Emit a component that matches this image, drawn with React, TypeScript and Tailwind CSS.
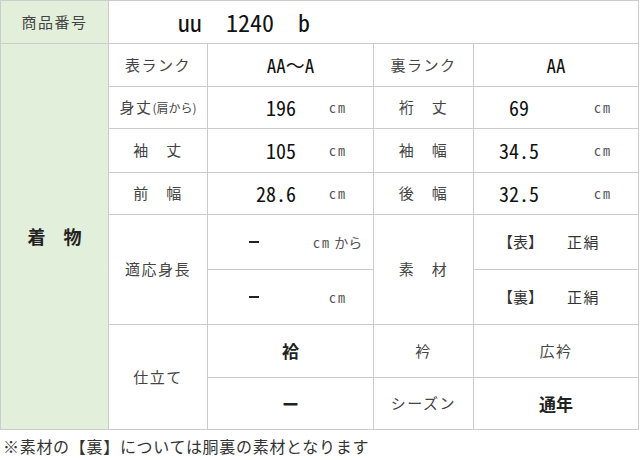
const jp = "font-['Noto_Sans_CJK_JP',sans-serif]";
const mono = "font-['Noto_Sans_Mono_CJK_JP','DejaVu_Sans_Mono',monospace]";
const cell = "border border-[#cccccc] p-0 align-middle";
const label = `${cell} text-center text-[15px] tracking-[1.5px] text-[#444] ${jp}`;

function Measure({ value, wide }: { value: string; wide?: boolean }) {
  // 左は右揃え、右は中央揃え
  return (
    <td className={cell}>
      <div className="flex items-center">
        <span
          className={`${wide ? "w-[90px] text-center" : "w-[88px] text-right"} text-[20px] text-[#111] ${mono}`}
        >
          {value}
        </span>
        <span className={`${wide ? "ml-[30px]" : "ml-[33px]"} text-[14px] tracking-[2px] text-[#555] ${mono}`}>
          cm
        </span>
      </div>
    </td>
  );
}

export default function App() {
  return (
    <div className="w-[640px] h-[460px] bg-white">
      <table className="table-fixed border-collapse w-[638px]">
        <colgroup>
          <col className="w-[108px]" />
          <col className="w-[99px]" />
          <col className="w-[166px]" />
          <col className="w-[100px]" />
          <col className="w-[165px]" />
        </colgroup>
        <tbody>
          {/* 商品番号 */}
          <tr className="h-[43px]">
            <td className={`${label} bg-[#e2efda]`}>商品番号</td>
            <td colSpan={4} className={cell}>
              <span className={`pl-[69px] whitespace-pre text-[24px] text-[#111] ${mono}`}>uu  1240  b</span>
            </td>
          </tr>

          <tr className="h-[43px]">
            <td rowSpan={8} className={`${cell} bg-[#e2efda] text-center text-[18px] font-bold text-[#222] ${jp}`}>
              着　物
            </td>
            <td className={label}>表ランク</td>
            <td className={`${cell} text-center text-[19px] text-[#111] ${mono}`}>AA～A</td>
            <td className={label}>裏ランク</td>
            <td className={`${cell} text-center text-[19px] text-[#111] ${mono}`}>AA</td>
          </tr>

          <tr className="h-[42px]">
            <td className={`${label} tracking-[0.5px]`}>
              身丈<span className="text-[12px] tracking-normal">(肩から)</span>
            </td>
            <Measure value="196" />
            <td className={label}>裄　丈</td>
            <Measure value="69" wide />
          </tr>

          <tr className="h-[44px]">
            <td className={label}>袖　丈</td>
            <Measure value="105" />
            <td className={label}>袖　幅</td>
            <Measure value="34.5" wide />
          </tr>

          <tr className="h-[42px]">
            <td className={label}>前　幅</td>
            <Measure value="28.6" />
            <td className={label}>後　幅</td>
            <Measure value="32.5" wide />
          </tr>

          {/* 適応身長 / 素材 */}
          <tr className="h-[55px]">
            <td rowSpan={2} className={label}>適応身長</td>
            <td className={cell}>
              <div className="flex items-center">
                <span className="ml-[41px] w-[10px] h-[2px] bg-[#222]" />
                <span className={`ml-[54px] text-[14px] text-[#555] ${jp}`}>
                  <span className={`tracking-[2px] ${mono}`}>cm</span> から
                </span>
              </div>
            </td>
            <td rowSpan={2} className={label}>素　材</td>
            <td className={cell}>
              <div className={`flex items-center text-[15px] text-[#333] ${jp}`}>
                <span className="w-[93px] pl-[24px]">【表】</span>
                <span className="tracking-[1.5px]">正絹</span>
              </div>
            </td>
          </tr>
          <tr className="h-[55px]">
            <td className={cell}>
              <div className="flex items-center">
                <span className="ml-[41px] w-[10px] h-[2px] bg-[#222]" />
                <span className={`ml-[70px] text-[14px] tracking-[2px] text-[#555] ${mono}`}>cm</span>
              </div>
            </td>
            <td className={cell}>
              <div className={`flex items-center text-[15px] text-[#333] ${jp}`}>
                <span className="w-[93px] pl-[24px]">【裏】</span>
                <span className="tracking-[1.5px]">正絹</span>
              </div>
            </td>
          </tr>

          {/* 仕立て */}
          <tr className="h-[53px]">
            <td rowSpan={2} className={label}>仕立て</td>
            <td className={`${cell} text-center text-[17px] font-bold text-[#222] ${jp}`}>袷</td>
            <td className={label}>衿</td>
            <td className={label}>広衿</td>
          </tr>
          <tr className="h-[52px]">
            <td className={`${cell} text-center text-[17px] font-bold text-[#222] ${jp}`}>ー</td>
            <td className={label}>シーズン</td>
            <td className={`${cell} text-center text-[17px] font-bold text-[#222] ${jp}`}>通年</td>
          </tr>
        </tbody>
      </table>

      <p className={`mt-[4px] pl-[3px] text-[16px] tracking-[0.7px] text-[#333] ${jp}`}>
        ※素材の【裏】については胴裏の素材となります
      </p>
    </div>
  );
}
